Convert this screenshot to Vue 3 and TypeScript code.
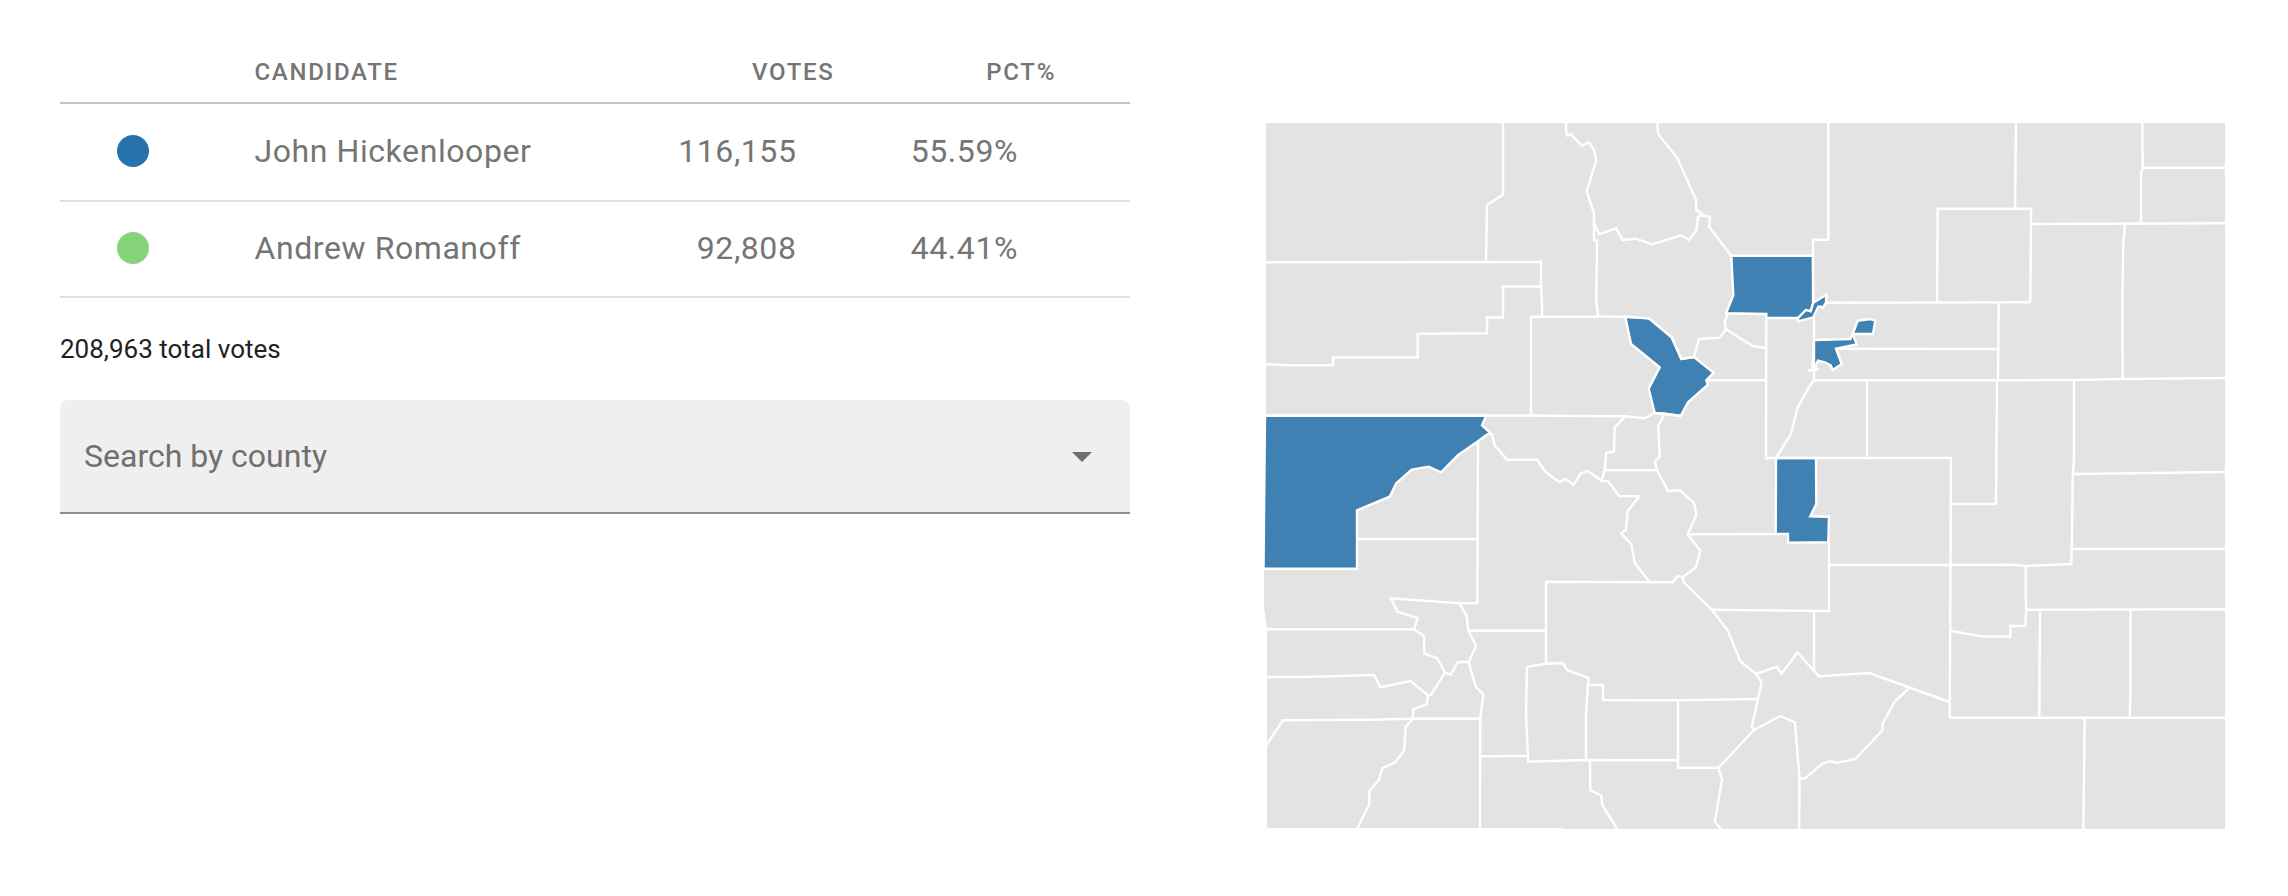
<script setup lang="ts">
import { ref } from 'vue'

interface Candidate {
  name: string
  votes: number
  pct: string
  tone: string
}

const candidates: Candidate[] = [
  { name: 'John Hickenlooper', votes: 116155, pct: '55.59%', tone: 'blue' },
  { name: 'Andrew Romanoff', votes: 92808, pct: '44.41%', tone: 'green' },
]

const format = (n: number): string => n.toLocaleString('en-US')
const total = candidates.reduce((sum, c) => sum + c.votes, 0)

const counties: string[] = ['Boulder', 'Broomfield', 'Denver', 'Mesa', 'Summit', 'Teller']
const county = ref('')

const state =
  '1266,123 2225,123 2225,829 1563,829 1563,828 1267,828 1267,629 1264,608 1264,568 1266,415'

// Counties with reported results
const reported: string[] = [
  // Mesa
  '1265,415.7 1486.3,415.7 1482,425.3 1490.7,433.3 1486.7,434.7 1478,441.3 1458.3,455 1441,472.3 1428.7,466.7 1411.7,469.7 1396.3,483.3 1389.7,496.7 1357,510.3 1357,568.7 1263.5,568.7',
  // Summit
  '1625.3,316.7 1649,318.3 1671.7,337.3 1681.3,359 1694,357 1713.7,372.7 1706.3,380.3 1708,384.7 1688,402.3 1680.7,416 1664.7,413.7 1654.7,413 1648.7,388.7 1659.7,367.3 1631,344',
  // Boulder
  '1731.3,255.7 1813,255.7 1813.3,302.7 1810.7,311.3 1806,310 1798,318 1766.3,318 1766.3,314 1726,313.3 1733.3,295.3',
  // Broomfield
  '1813.3,302.7 1826.3,294.7 1826,302.7 1822.7,308 1821.3,306.7 1818.3,306.7 1813.3,317.3 1798,321.3 1798,318 1806,310 1810.7,311.3',
  // Denver
  '1814,340 1850.3,339 1852.7,334 1856.7,344.3 1836,348.7 1841.7,364 1832.7,370 1830.7,365.3 1824.7,362.3 1818,360.7 1816,364.7 1815.3,369.3 1812.3,370',
  '1852.7,334 1857.7,320.7 1870.7,319 1875.3,320.7 1873,334',
  // Teller
  '1776,458 1816,458 1816.3,504 1810.3,516.3 1829,516.7 1828.3,542.3 1788,542.7 1788,534 1775.7,534',
]

const borders: string[] = [
  '1503,122 1503,194.5 1487,205 1486,262',
  '1265,262.3 1541,262 1541,286.5 1542,301.5 1542,316.7',
  '1265,364 1286,365.3 1333,365.3 1333,357.5 1417.7,357.3 1417.7,333.8 1487,333.3 1487,317.3 1503,317.7 1503,286.5 1541,286.5',
  '1531,415.3 1531,316.7 1598,316.7',
  '1265,415.5 1531,415.5 1580,416 1625,416.3 1644.7,418.3 1654.7,413 1664.7,413.7 1680.7,416',
  '1565.7,122 1566.7,135.3 1570.3,134 1582,145.7 1589,142.3 1594,150 1596.3,160.3 1586.7,191.3 1594,213.3 1594,240 1597,240.7 1596.3,301.7 1598,316.7',
  '1594,223.3 1599.3,234.3 1616.3,228.3 1622.7,240 1635.7,238.7 1652.3,244.3 1680.7,235.3 1689,240 1696.3,230.7 1698,216.7 1703.7,215.3',
  '1657.3,122 1658,133.7 1677.3,158 1696,200 1696.3,210 1703.7,215.3 1710,217 1709.3,227 1731.3,255.7',
  '1828.3,122 1828.3,239.7 1813,239.7 1813,303.3',
  '1826,302.7 2030.7,302.3',
  '1598,316.5 1625.3,316.7 1649,318.3 1671.7,337.3 1681.3,359 1694,357 1699,339 1719.7,337.7 1726,329.3 1724.7,322 1727.7,314',
  '1726,329.3 1752.7,346 1766.3,348',
  '1766.3,318 1766,458 1776,458',
  '1814,317.3 1814,380.3 1810,385.3 1797.3,408.3 1791,434 1776,458',
  '1807.7,370.7 1818.3,369.3',
  '1706.3,380.3 1766,380.3',
  '1836,348.7 1998.3,349',
  '1814,380.3 1998,380.3 2074,380 2122.7,379 2226,378',
  '1867,380.3 1867,457.5',
  '2016,122 2015,209',
  '1937,302.3 1937.7,208.7 2031,208.7 2031,224 2030.3,302.3',
  '2142.3,122 2142.7,168 2141,173.3 2141,224',
  '2142.7,167.7 2226,167.7',
  '2031,224 2226,223.3',
  '2125,224 2123.3,243.3 2122.3,301.7 2122.7,379',
  '1998.7,302.3 1998,380.3',
  '1997,380.3 1996,504 1950.7,504',
  '2074,380 2074,460 2072.7,474 2072,535 2071.3,564 2026.7,566 2013.3,564.7 1829.3,565',
  '2072.7,474 2133.3,473.3 2226,472',
  '2071.5,549 2226,549',
  '1776,458 1951,458 1950.5,565 1949.7,718',
  '2025.7,566 2025.7,596.7 2026.3,609.3 2025.3,626 2010.3,626 2010.3,636.5 1980,636.3 1950.7,630.7',
  '2026.3,609.7 2226,609.3',
  '2040,609.7 2039.3,718',
  '2130.5,609.5 2130.5,690 2129.7,718',
  '1949.7,717.7 2226,717.7',
  '2084.7,718 2083.3,830',
  '1829,542.3 1829,611 1711.7,609.7',
  '1687.7,534.3 1776,534',
  '1814,611 1814,670.7',
  '1625.3,416.3 1614.7,427.3 1614,451.3 1606.3,453 1604.7,470 1601.7,481',
  '1604.7,470.3 1657,470.3',
  '1664.7,413.7 1658.3,425.7 1659.7,456.3 1655,462 1657,470.3 1668,490.7 1679.7,490.3 1694,502.7 1696.3,515 1687.7,534.3 1700.3,550.7 1696,567.3 1682.7,577.3 1677.7,575.7 1672.7,582.3 1546,581.7 1546,663.7',
  '1682.7,577.3 1683.7,582.3 1711.7,609.7 1727.7,630.3 1740.3,661.3 1756,674 1761.6,682 1752,726 1754,730',
  '1490.7,433.3 1492,435 1494.7,445.3 1507.3,459.7 1537,459.7 1546,472.3 1559.3,482 1565.3,479 1573.7,484.7 1580.7,473.3 1588.3,471 1601.7,481 1608,481.3 1619.3,496 1639.3,496.3 1627.7,511 1626,529.3 1621.3,533.7 1631.3,544 1634.7,562.7 1649.3,582',
  '1478,441.3 1477.3,603.3 1459.3,603.3 1391,598.3 1397.3,611.7 1417.7,618 1414,629.3',
  '1357,539 1477.3,539',
  '1266,629.3 1414,629.3 1424,636 1424.3,653.7 1437,658 1445,672.7 1450.7,674.7 1458,662 1468.7,662',
  '1459.3,603.3 1466.7,615.7 1468.3,630.7 1476,645.7 1468.7,662 1475.7,686.7 1483.3,694.3 1480.3,718.7 1480,829',
  '1468.3,630.7 1546,630.7',
  '1266,677 1301.7,677 1374.3,675 1380.3,687.3 1410.7,681 1428,695.3 1431,695 1445,672.7',
  '1428,695.3 1426.7,704.3 1413.3,709 1413,718.7 1405.7,727 1404,751 1394.7,762.7 1382,768.3 1379,780 1369.3,790.7 1369.3,804.3 1357,829',
  '1266,745.5 1283,720.3 1368.3,719.7 1413,718.7 1480.3,718.7',
  '1527,666.7 1546,663.7 1562.7,663 1567.3,670 1588.7,678 1588,685 1586,713.3 1586,760',
  '1527,666.7 1526,713.3 1528.3,761.7 1586,760 1678,760.3',
  '1480,756.3 1528,756',
  '1588,685 1603,685 1603,700 1678,700.3 1756.8,699',
  '1678,700 1678,767.7 1718.6,767.7',
  '1590,760.3 1590.3,790 1601.3,795.7 1602.3,805 1617.7,830',
  '1754,730 1718.6,767.7 1722,780 1714.8,822 1722,830',
  '1754,730 1780.2,716 1795,722.3 1799.5,779 1799.2,830',
  '1799.5,779 1805,778.3 1821.6,764.3 1830.2,761 1836.7,763 1855.6,759 1865.3,748.3 1882.5,730.3 1882.5,723.7 1895.2,701 1909.4,688',
  '1756,674 1777,666.7 1781.6,673.7 1797.5,652.3 1818.8,676.3 1869.4,673 1949.7,702',
]
</script>

<template>
  <main class="page">
    <section class="results">
      <table class="table">
        <colgroup>
          <col class="col-key" />
          <col class="col-name" />
          <col class="col-votes" />
          <col class="col-pct" />
        </colgroup>
        <thead>
          <tr>
            <th></th>
            <th scope="col">CANDIDATE</th>
            <th scope="col" class="num">VOTES</th>
            <th scope="col" class="num">PCT%</th>
          </tr>
        </thead>
        <tbody>
          <tr v-for="c in candidates" :key="c.name">
            <td><span class="dot" :class="c.tone"></span></td>
            <td>{{ c.name }}</td>
            <td class="num">{{ format(c.votes) }}</td>
            <td class="num">{{ c.pct }}</td>
          </tr>
        </tbody>
      </table>

      <p class="total">{{ format(total) }} total votes</p>

      <div class="field">
        <select v-model="county" class="select" aria-label="Search by county">
          <option value="" disabled>Search by county</option>
          <option v-for="name in counties" :key="name" :value="name">{{ name }}</option>
        </select>
        <svg class="arrow" viewBox="0 0 20 10" aria-hidden="true"><path d="M0 0h20L10 10z" /></svg>
      </div>
    </section>

    <svg class="map" viewBox="1264 122 962 708" role="img" aria-label="Colorado counties">
      <polygon class="state" :points="state" />
      <polygon v-for="points in reported" :key="points" class="county" :points="points" />
      <polyline v-for="points in borders" :key="points" class="border" :points="points" />
    </svg>
  </main>
</template>

<style>
body {
  margin: 0;
  background: #fff;
}
</style>

<style scoped>
.page {
  display: grid;
  grid-template-columns: 1070fr 962fr;
  column-gap: 134px;
  align-items: start;
  padding: 40px 62px 60px 60px;
  font-family: Roboto, "Liberation Sans", sans-serif;
  color: #757575;
}

.table {
  width: 100%;
  table-layout: fixed;
  border-collapse: separate;
  border-spacing: 0;
  font-size: 32px;
  letter-spacing: 0.018em;
}

.col-key {
  width: 15%;
}

.col-name {
  width: 39%;
}

.col-votes {
  width: 25.3%;
}

.col-pct {
  width: 20.7%;
}

th,
td {
  box-sizing: border-box;
  padding: 0 0 0 34px;
  text-align: left;
  font-weight: 400;
}

th {
  height: 64px;
  padding-top: 16px;
  border-bottom: 2px solid #c4c4c4;
  font-size: 24px;
  font-weight: 500;
  letter-spacing: 0.07em;
  line-height: 32px;
  vertical-align: top;
}

td {
  height: 96px;
  padding-bottom: 2px;
  border-bottom: 2px solid #e0e0e0;
  line-height: 40px;
}

tbody tr:first-child td {
  height: 98px;
}

td:first-child {
  padding-left: 57px;
}

.num {
  padding-left: 0;
  text-align: right;
}

th.num {
  padding-right: 74px;
}

td.num {
  padding-right: 112px;
}

.dot {
  display: block;
  width: 32px;
  height: 32px;
  border-radius: 50%;
}

.blue {
  background: #2673ab;
}

.green {
  background: #87d37c;
}

.total {
  margin: 33px 0;
  font-size: 26px;
  line-height: 36px;
  color: #212121;
}

.field {
  position: relative;
}

.select {
  display: block;
  box-sizing: border-box;
  width: 100%;
  height: 114px;
  padding: 0 80px 0 24px;
  border: 0;
  border-bottom: 2px solid #8e8e8e;
  border-radius: 8px 8px 0 0;
  outline: none;
  appearance: none;
  background: #efefef;
  font: inherit;
  font-size: 32px;
  color: #707070;
}

.arrow {
  position: absolute;
  top: 52px;
  right: 38px;
  width: 20px;
  height: 10px;
  fill: #6e6e6e;
  pointer-events: none;
}

.map {
  display: block;
  width: 100%;
  margin-top: 82px;
}

.state {
  fill: #e3e3e3;
}

.county {
  fill: #4081b3;
  stroke: #fff;
  stroke-width: 2.4;
}

.border {
  fill: none;
  stroke: #fff;
  stroke-width: 2.4;
}
</style>
